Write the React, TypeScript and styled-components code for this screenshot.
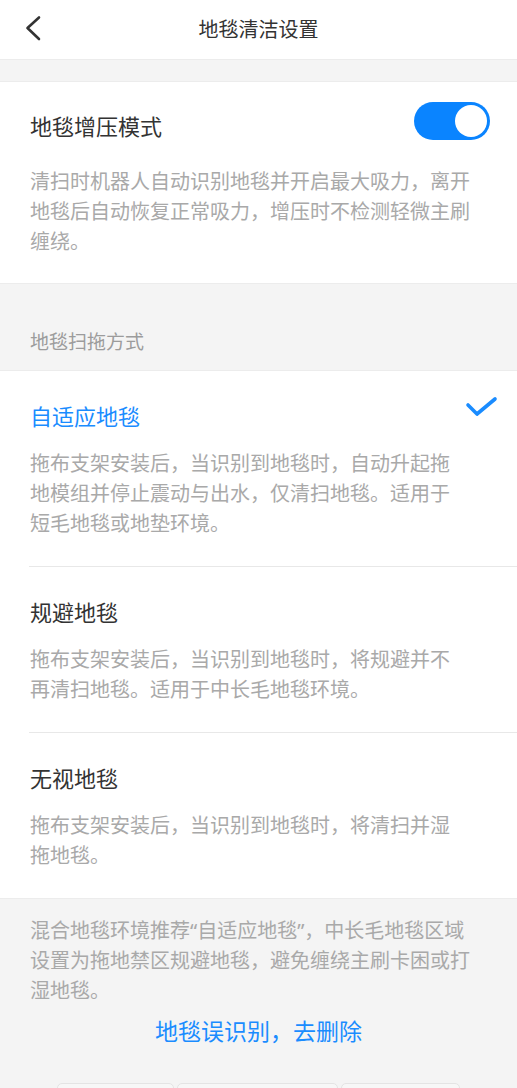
import { FC, useState } from "react";
import styled, { createGlobalStyle } from "styled-components";

const GlobalStyle = createGlobalStyle`
  html, body {
    margin: 0;
    padding: 0;
    background: #f4f4f4;
    font-family: "Noto Sans", "Noto Sans CJK SC", sans-serif;
    -webkit-font-smoothing: antialiased;
  }
  * {
    box-sizing: border-box;
  }
`;

const Page = styled.div`
  width: 517px;
  height: 1088px;
  overflow: hidden;
  background: #f4f4f4;
`;

const Header = styled.div`
  height: 60px;
  background: #fff;
  border-bottom: 1px solid #ececec;
  display: flex;
  align-items: center;
  justify-content: center;
  position: relative;
`;

const BackButton = styled.button`
  position: absolute;
  left: 18px;
  top: 12px;
  width: 32px;
  height: 34px;
  padding: 0;
  border: none;
  background: transparent;
  display: flex;
  align-items: center;
  justify-content: center;
`;

const Title = styled.h1`
  margin: 0;
  font-size: 20px;
  font-weight: 400;
  color: #333;
  line-height: 30px;
`;

const Card = styled.div`
  background: #fff;
  border-top: 1px solid #ececec;
  border-bottom: 1px solid #ececec;
`;

const BoostCard = styled(Card)`
  margin-top: 21px;
  padding: 19px 27px 26px 30px;
`;

const TitleRow = styled.div`
  display: flex;
  align-items: center;
  justify-content: space-between;
`;

const ItemTitle = styled.div<{ active?: boolean }>`
  font-size: 22px;
  line-height: 30px;
  color: ${({ active }) => (active ? "#1a8cff" : "#333")};
`;

const BoostTitle = styled(ItemTitle)`
  margin-top: 10px;
`;

const Desc = styled.p<{ gap?: number }>`
  margin: ${({ gap = 18 }) => gap}px 0 0;
  font-size: 20px;
  line-height: 30px;
  color: #a9a9a9;
`;

const BoostDesc = styled(Desc)`
  max-width: 445px;
`;

const Toggle = styled.div<{ on: boolean }>`
  width: 76px;
  height: 38px;
  border-radius: 19px;
  background: ${({ on }) => (on ? "#0a84ff" : "#e3e3e3")};
  padding: 3px;
  display: flex;
  justify-content: ${({ on }) => (on ? "flex-end" : "flex-start")};
  cursor: pointer;
`;

const Knob = styled.div`
  width: 32px;
  height: 32px;
  border-radius: 50%;
  background: #fff;
`;

const SectionLabel = styled.div`
  padding: 43px 30px 13px;
  font-size: 19px;
  line-height: 30px;
  color: #9c9c9c;
`;

const OptionList = styled(Card)`
  padding-left: 29px;
`;

const Option = styled.div<{ last?: boolean }>`
  padding: 30px 18px 27px 1px;
  border-bottom: ${({ last }) => (last ? "none" : "1px solid #e8e8e8")};
  cursor: pointer;
`;

const OptionDesc = styled(Desc)`
  max-width: 425px;
`;

const CheckMark = styled.svg`
  margin-top: -16px;
`;

const Note = styled.p`
  margin: 0;
  padding: 17px 0 0 30px;
  max-width: 475px;
  font-size: 20px;
  line-height: 30px;
  color: #a9a9a9;
`;

const Link = styled.div`
  margin-top: 9px;
  text-align: center;
  font-size: 23px;
  line-height: 32px;
  color: #1a8cff;
`;

const BottomBar = styled.div`
  margin-top: 36px;
  padding: 0 57px;
  display: flex;
  gap: 3px;
`;

const BottomTab = styled.div<{ w: number }>`
  width: ${({ w }) => w}px;
  height: 30px;
  border: 1px solid #e4e4e4;
  border-radius: 5px;
  background: #f7f7f7;
`;

const Check = () => (
  <CheckMark width="34" height="26" viewBox="0 0 34 26">
    <path
      d="M3 10 L12 19 L30 4"
      fill="none"
      stroke="#1a8cff"
      strokeWidth="3.6"
      strokeLinecap="round"
      strokeLinejoin="round"
    />
  </CheckMark>
);

const options = [
  {
    id: "adaptive",
    title: "自适应地毯",
    desc: "拖布支架安装后，当识别到地毯时，自动升起拖地模组并停止震动与出水，仅清扫地毯。适用于短毛地毯或地垫环境。",
  },
  {
    id: "avoid",
    title: "规避地毯",
    desc: "拖布支架安装后，当识别到地毯时，将规避并不再清扫地毯。适用于中长毛地毯环境。",
  },
  {
    id: "ignore",
    title: "无视地毯",
    desc: "拖布支架安装后，当识别到地毯时，将清扫并湿拖地毯。",
  },
];

const App: FC = () => {
  const [boost, setBoost] = useState<boolean>(true);
  const [mode, setMode] = useState<string>("adaptive");

  return (
    <Page>
      <GlobalStyle />
      <Header>
        <BackButton>
          <svg width="20" height="28" viewBox="0 0 20 28">
            <path
              d="M15 2.5 L3.5 13 L15 24"
              fill="none"
              stroke="#333"
              strokeWidth="2.6"
              strokeLinecap="round"
              strokeLinejoin="round"
            />
          </svg>
        </BackButton>
        <Title>地毯清洁设置</Title>
      </Header>

      <BoostCard>
        <TitleRow>
          <BoostTitle>地毯增压模式</BoostTitle>
          <Toggle on={boost} onClick={() => setBoost(!boost)}>
            <Knob />
          </Toggle>
        </TitleRow>
        <BoostDesc gap={26}>
          清扫时机器人自动识别地毯并开启最大吸力，离开地毯后自动恢复正常吸力，增压时不检测轻微主刷缠绕。
        </BoostDesc>
      </BoostCard>

      <SectionLabel>地毯扫拖方式</SectionLabel>

      <OptionList>
        {options.map((item, index) => (
          <Option
            key={item.id}
            last={index === options.length - 1}
            onClick={() => setMode(item.id)}
          >
            <TitleRow>
              <ItemTitle active={mode === item.id}>{item.title}</ItemTitle>
              {mode === item.id && <Check />}
            </TitleRow>
            <OptionDesc>{item.desc}</OptionDesc>
          </Option>
        ))}
      </OptionList>

      <Note>
        混合地毯环境推荐“自适应地毯”，中长毛地毯区域设置为拖地禁区规避地毯，避免缠绕主刷卡困或打湿地毯。
      </Note>
      <Link>地毯误识别，去删除</Link>

      <BottomBar>
        <BottomTab w={117} />
        <BottomTab w={162} />
        <BottomTab w={119} />
      </BottomBar>
    </Page>
  );
};

export default App;
